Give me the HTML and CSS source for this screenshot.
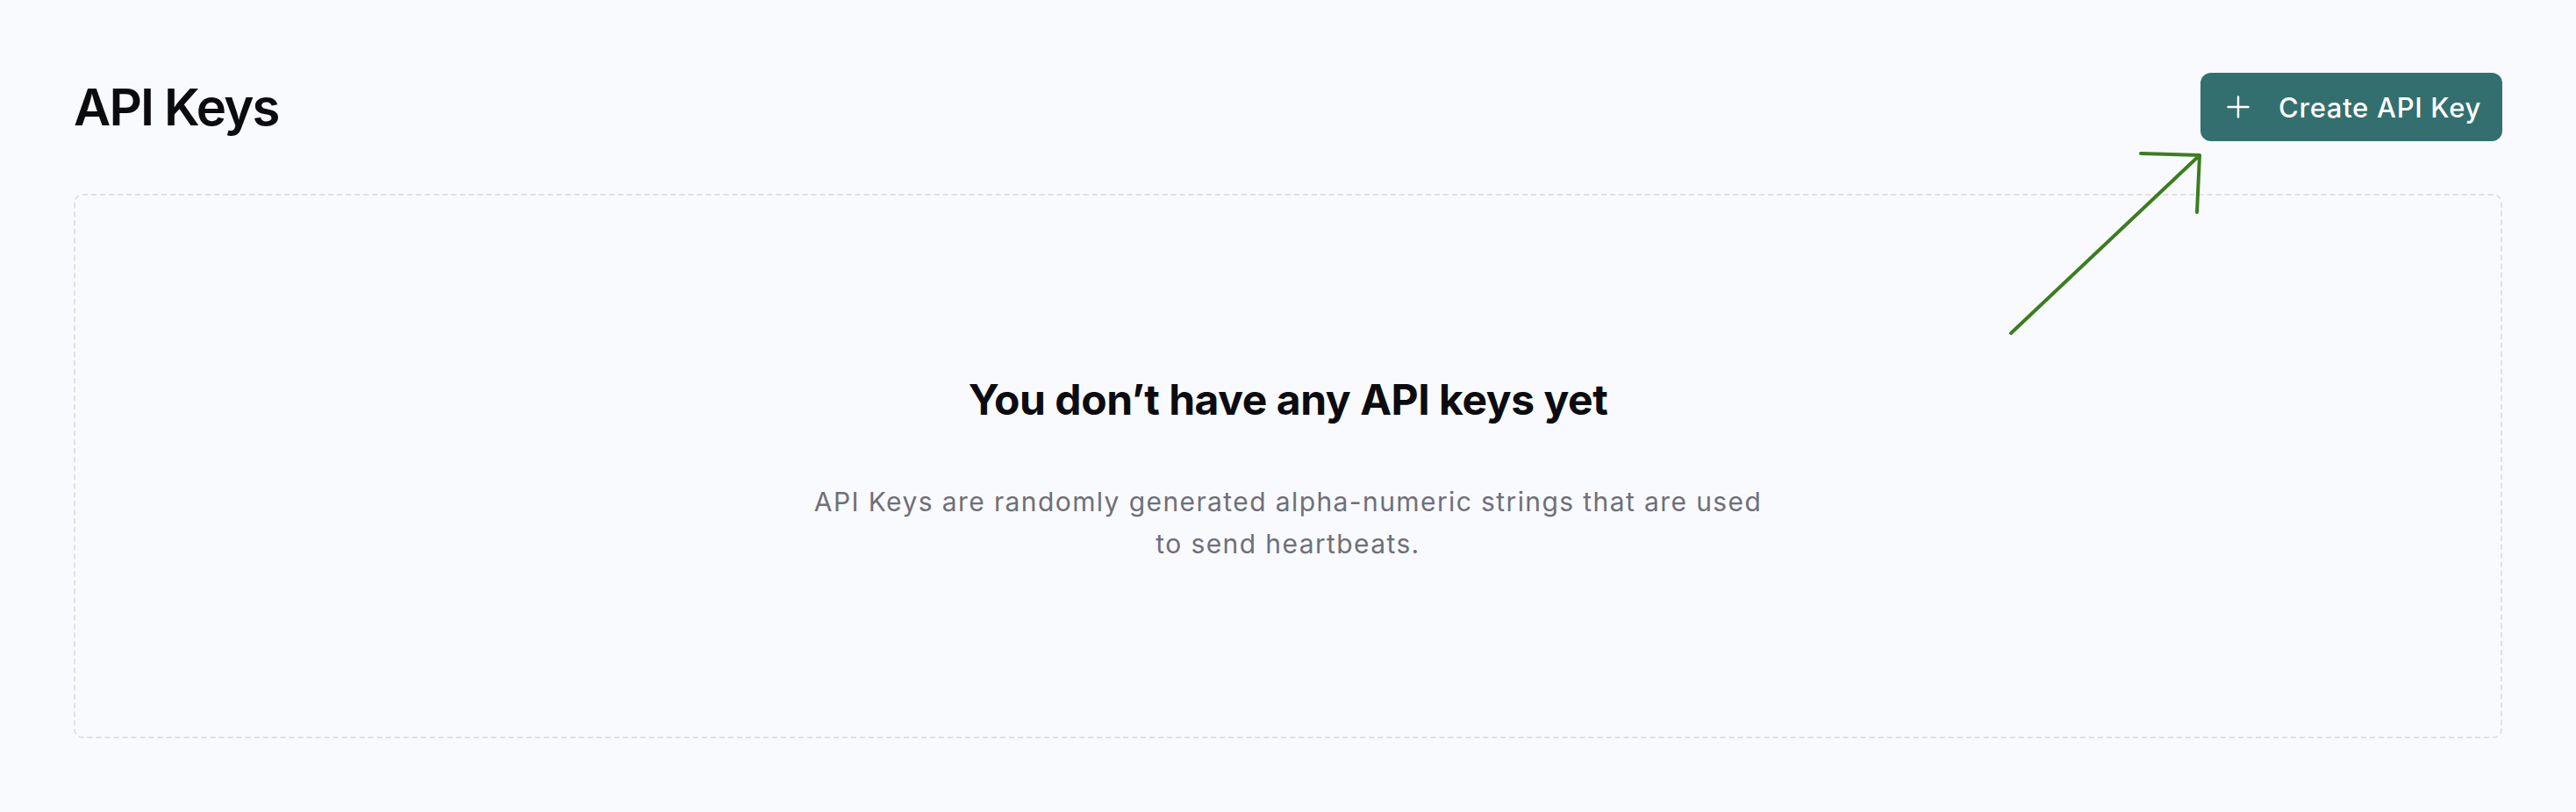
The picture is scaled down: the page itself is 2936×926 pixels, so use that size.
FILE: index.html
```html
<!DOCTYPE html>
<html lang="en">
<head>
<meta charset="utf-8">
<title>API Keys</title>
<link rel="stylesheet" href="styles.css">
</head>
<body>
<main class="page">
  <header class="page-header">
    <h1 class="page-title">API Keys</h1>
    <button class="btn-create" type="button">
      <svg class="btn-icon" width="26" height="26" viewBox="0 0 26 26" aria-hidden="true">
        <path d="M13 1.5V24.5M1.5 13H24.5" stroke="#fff" stroke-width="2.4" stroke-linecap="round" fill="none"/>
      </svg>
      <span>Create API Key</span>
    </button>
  </header>
  <section class="empty-state">
    <h2 class="empty-title">You don’t have any API keys yet</h2>
    <p class="empty-text">API Keys are randomly generated alpha-numeric strings that are used to send heartbeats.</p>
  </section>
  <svg class="annotation-arrow" width="240" height="230" viewBox="0 0 240 230" aria-hidden="true">
    <path d="M12 215L227 12M160 10L227 12L224 77" stroke="#3b7d20" stroke-width="4" stroke-linecap="round" stroke-linejoin="round" fill="none"/>
  </svg>
</main>
</body>
</html>
```
FILE: styles.css
```css
html, body {
  margin: 0;
  padding: 0;
  background: #f9fafd;
}
body {
  font-family: Inter, "Noto Sans", "Liberation Sans", sans-serif;
  color: #0c0c10;
}
.page {
  position: relative;
  padding: 83px 84px 84px;
}
.page-header {
  display: flex;
  align-items: center;
  justify-content: space-between;
  height: 78px;
}
.page-title {
  margin: 0;
  font-size: 58px;
  font-weight: 600;
  letter-spacing: -1.8px;
  line-height: 1;
}
.btn-create {
  display: flex;
  align-items: center;
  gap: 33px;
  height: 78px;
  padding: 0 24px 0 30px;
  border: none;
  border-radius: 12px;
  background: #346f6f;
  color: #fff;
  font-family: inherit;
  font-size: 31px;
  font-weight: 500;
  letter-spacing: 0.7px;
}
.btn-icon {
  display: block;
}
.empty-state {
  margin-top: 60px;
  height: 609px;
  padding-top: 8px;
  border: 2px dashed #dfe0e4;
  border-radius: 10px;
  display: flex;
  flex-direction: column;
  align-items: center;
  justify-content: center;
  text-align: center;
}
.empty-title {
  margin: 0;
  font-size: 48px;
  font-weight: 700;
  letter-spacing: -0.45px;
  line-height: 1.2;
}
.empty-text {
  margin: 64px 0 0;
  max-width: 1110px;
  font-size: 30px;
  line-height: 48px;
  letter-spacing: 1.4px;
  color: #6f6f78;
}
.annotation-arrow {
  position: absolute;
  left: 2280px;
  top: 165px;
}
```
